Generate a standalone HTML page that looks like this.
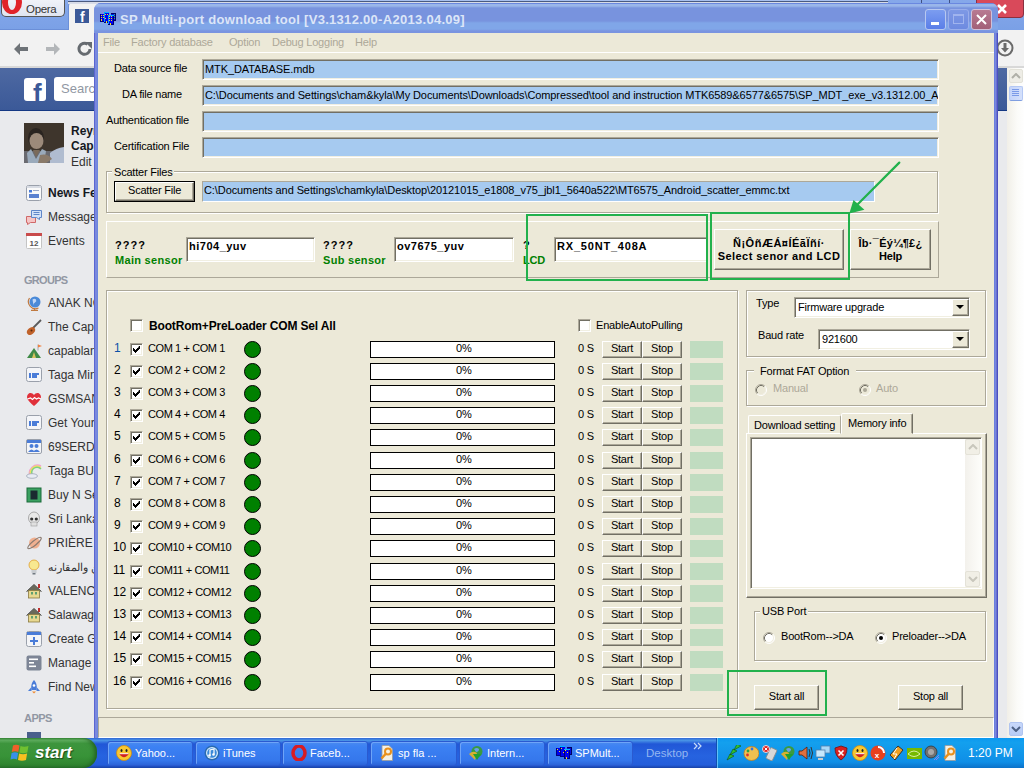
<!DOCTYPE html><html><head><meta charset="utf-8"><style>
*{margin:0;padding:0;box-sizing:border-box}
html,body{-webkit-font-smoothing:antialiased;width:1024px;height:768px;overflow:hidden;background:#e9eaed;font-family:"Liberation Sans",sans-serif;font-size:11px;color:#000}
.a{position:absolute}
.t{position:absolute;white-space:nowrap;line-height:13px;font-size:11px;letter-spacing:-0.2px}
.b{font-weight:bold}
/* sunken edit */
.ed{position:absolute;border:1px solid;border-color:#aca899 #fff #fff #aca899;box-shadow:inset 1px 1px 0 #716f64, inset -1px -1px 0 #f1efe2}
.ed2{position:absolute;border:1px solid;border-color:#aca899 #fff #fff #aca899;box-shadow:inset 1px 1px 0 #716f64, inset -1px -1px 0 #f1efe2}
.btn{position:absolute;background:#ece9d8;border:1px solid;border-color:#fff #716f64 #716f64 #fff;box-shadow:inset -1px -1px 0 #aca899}
.etch{position:absolute;border:1px solid;border-color:#aca899 #fff #fff #aca899;box-shadow:inset 1px 1px 0 #fff, 1px 1px 0 #aca899 inset}
.grp{position:absolute;border:1px solid #aca899;box-shadow:1px 1px 0 #fff, inset 1px 1px 0 #fff}
.cb{position:absolute;width:13px;height:13px;background:#fff;border:1px solid;border-color:#aca899 #fff #fff #aca899;box-shadow:inset 1px 1px 0 #716f64, inset -1px -1px 0 #f1efe2}
.gline{position:absolute;background:#22b14c}
</style></head><body><div class="a" style="left:0;top:0;width:1024px;height:30px;background:linear-gradient(#86a8ea,#7aa0e6)"></div>
<div class="a" style="left:1px;top:-4px;width:64px;height:21px;border:1px solid #555;border-top:none;border-radius:0 0 5px 5px;background:linear-gradient(#f4f6fb,#dfe4f0)"></div>
<div class="a" style="left:2px;top:-9px;width:20px;height:23px;border-radius:50%;border:4px solid #e0232a;border-left-width:6px;border-right-width:6px"></div>
<div class="t" style="left:26px;top:3px;font-size:11.5px;color:#333;letter-spacing:-0.3px">Opera</div>
<div class="a" style="left:68px;top:2px;width:300px;height:30px;background:#f2f2f2;border-radius:4px 4px 0 0;border:1px solid #6b8fd8;border-bottom:none"></div>
<div class="a" style="left:75px;top:9px;width:14px;height:14px;background:#3b5998"></div>
<div class="t b" style="left:80px;top:9px;font-size:14px;color:#fff;line-height:16px">f</div>
<div class="a" style="left:976px;top:-4px;width:48px;height:22px;background:#d9495a;border-radius:0 0 4px 4px;border:1px solid #8a3040"></div>
<svg class="a" style="left:994px;top:2px" width="16" height="14"><path d="M4 3 L12 11 M12 3 L4 11" stroke="#fff" stroke-width="2.6"/></svg>
<div class="a" style="left:0;top:30px;width:1024px;height:37px;background:#f2f2f2"></div><div class="a" style="left:0;top:29px;width:68px;height:1px;background:#6b8fd8"></div>
<div class="a" style="left:0;top:66px;width:1024px;height:2px;background:#d8d8d8"></div>
<svg class="a" style="left:12px;top:41px" width="20" height="16"><path d="M2 8 L8 2 L8 6 L16 6 L16 10 L8 10 L8 14 Z" fill="#6e7378"/></svg>
<svg class="a" style="left:44px;top:41px" width="20" height="16"><path d="M16 8 L10 2 L10 6 L2 6 L2 10 L10 10 L10 14 Z" fill="#b3b6b9"/></svg>
<svg class="a" style="left:77px;top:41px" width="16" height="16"><path d="M13 8 A5.5 5.5 0 1 1 10.5 3.2" fill="none" stroke="#666b70" stroke-width="3"/><path d="M8 1 L15 1 L15 8 Z" fill="#666b70"/></svg>
<svg class="a" style="left:996px;top:39px" width="18" height="18"><circle cx="9" cy="9" r="7.5" fill="none" stroke="#6a6a6a" stroke-width="2"/><path d="M7.5 4 h3 v5 h2.5 l-4 4.5 l-4 -4.5 h2.5z" fill="#6a6a6a"/></svg>
<div class="a" style="left:0;top:68px;width:1010px;height:43px;background:linear-gradient(#4e69a2,#3b5998);border-bottom:1px solid #133783"></div>
<div class="a" style="left:24px;top:78px;width:22px;height:23px;background:#fff;border-radius:3px;overflow:hidden"><div class="t b" style="left:9px;top:1px;font-size:26px;line-height:28px;color:#3b5998;letter-spacing:0">f</div></div>
<div class="a" style="left:54px;top:77px;width:60px;height:24px;background:#fff;border-radius:3px"></div>
<div class="t" style="left:61px;top:82px;font-size:13px;color:#9197a3;letter-spacing:0">Search</div>
<svg class="a" style="left:24px;top:123px" width="40" height="40"><rect width="40" height="40" fill="#3e352c"/><rect x="0" y="28" width="40" height="12" fill="#6a6a70"/><path d="M26 40 L26 30 Q32 25 40 24 L40 40Z" fill="#b0bcd0"/><ellipse cx="12" cy="15" rx="8" ry="10" fill="#2a2420"/><ellipse cx="12.5" cy="18" rx="7" ry="8" fill="#9c8a7a"/><path d="M7 26 L12 36 L18 26 L22 28 L20 40 L4 40 L3 30Z" fill="#9aaabb"/><path d="M9 27 L12 34 L16 27" fill="#7a6a5a"/><path d="M16 32 Q24 30 28 36 L22 40 L14 40Z" fill="#8a7a6a"/></svg>
<div class="t b" style="left:71px;top:125px;font-size:12px;color:#141823;letter-spacing:0">Reyna</div>
<div class="t b" style="left:71px;top:140px;font-size:12px;color:#141823;letter-spacing:0">Capa</div>
<div class="t" style="left:71px;top:156px;font-size:12px;color:#333;letter-spacing:0">Edit</div>
<svg class="a" style="left:26px;top:185px" width="16" height="16"><rect x="0.5" y="0.5" width="15" height="15" rx="2" fill="#fafafa" stroke="#9aa0ab"/><rect x="1" y="1" width="14" height="2" fill="#d8dce4"/><rect x="3" y="5" width="3" height="2.5" fill="#4a7cd8"/><rect x="7" y="5" width="6" height="1" fill="#9aa8c8"/><rect x="3" y="9" width="10" height="4" fill="#5b82d0"/></svg>
<div class="t b" style="left:48px;top:187px;font-size:12px;color:#141823;letter-spacing:0">News Feed</div>
<svg class="a" style="left:26px;top:209px" width="16" height="16"><path d="M0.5 7.5 h9 v6 h-5 l-3 2 v-2 h-1z" fill="#f5c5c5" stroke="#d06868" stroke-width="1"/><path d="M5.5 1.5 h10 v7 h-2 v2 l-3 -2 h-5z" fill="#d3e2f8" stroke="#5f86c9" stroke-width="1"/><path d="M7.5 3.5 h6 M7.5 5.5 h6" stroke="#5f86c9" stroke-width="1"/></svg>
<div class="t" style="left:48px;top:211px;font-size:12px;color:#333;letter-spacing:0">Messages</div>
<svg class="a" style="left:26px;top:233px" width="16" height="16"><rect x="0.5" y="0.5" width="15" height="15" rx="1" fill="#fff" stroke="#c4c4c4"/><rect x="0" y="0" width="16" height="3" fill="#c94b4b"/><text x="8" y="13" font-family="Liberation Sans" font-size="8" font-weight="bold" fill="#555" text-anchor="middle">12</text></svg>
<div class="t" style="left:48px;top:235px;font-size:12px;color:#333;letter-spacing:0">Events</div>
<div class="t b" style="left:24px;top:274px;font-size:11px;color:#9197a3;letter-spacing:-0.7px">GROUPS</div>
<svg class="a" style="left:26px;top:295px" width="16" height="16"><circle cx="9" cy="7" r="5.5" fill="#4a8ad8"/><path d="M6.5 4.5 q2 -1.5 3.5 0 q1 2 -1 3 q-2 1 -1.5 3" fill="#dfeaff" opacity=".8"/><path d="M3.5 3 A7 7 0 0 0 12.5 13" stroke="#c07a40" fill="none" stroke-width="1.2"/><path d="M5 15.5 h7" stroke="#c07a40" stroke-width="1.5"/><path d="M8.5 13 v2" stroke="#c07a40"/></svg>
<div class="t" style="left:48px;top:297px;font-size:12px;color:#333;letter-spacing:0">ANAK NO</div>
<svg class="a" style="left:26px;top:319px" width="16" height="16"><path d="M15 1 L7 9" stroke="#5a5a5a" stroke-width="1.8"/><ellipse cx="5" cy="12" rx="4.5" ry="3.3" transform="rotate(-40 5 12)" fill="#c0622a"/><circle cx="5.5" cy="11.5" r="1" fill="#5a2a10"/></svg>
<div class="t" style="left:48px;top:321px;font-size:12px;color:#333;letter-spacing:0">The Capa</div>
<svg class="a" style="left:26px;top:343px" width="16" height="16"><path d="M1 15 L8 5 L15 15 Z" fill="#3f8a46"/><path d="M6 15 L8 9 L10 15Z" fill="#d8c060"/><path d="M12 1.5 v6" stroke="#999" stroke-width="0.8"/><path d="M12 1.5 l4 1.5 l-4 1.5z" fill="#f08040"/></svg>
<div class="t" style="left:48px;top:345px;font-size:12px;color:#333;letter-spacing:0">capablanca</div>
<svg class="a" style="left:26px;top:367px" width="16" height="16"><rect x="0.5" y="0.5" width="15" height="14" rx="2" fill="#f4f5f8" stroke="#9aa0ab"/><path d="M3 6 h2 v5 h-2z M6 6 h7 v2 h-2 v3 h-5z" fill="#4a7cd8"/></svg>
<div class="t" style="left:48px;top:369px;font-size:12px;color:#333;letter-spacing:0">Taga Mind</div>
<svg class="a" style="left:26px;top:391px" width="16" height="16"><path d="M8 15 C2 10 0 7 1.5 4 C3 1 6.5 1.5 8 4 C9.5 1.5 13 1 14.5 4 C16 7 14 10 8 15Z" fill="#e0303a"/><path d="M1.5 8 l3 -1 l2 1.5 l2 -2 l2 1.5 l2 -1 l2.5 1" stroke="#fff" fill="none" stroke-width="1.2"/></svg>
<div class="t" style="left:48px;top:393px;font-size:12px;color:#333;letter-spacing:0">GSMSAN</div>
<svg class="a" style="left:26px;top:415px" width="16" height="16"><rect x="0.5" y="0.5" width="15" height="14" rx="2" fill="#f4f5f8" stroke="#9aa0ab"/><path d="M3 6 h2 v5 h-2z M6 6 h7 v2 h-2 v3 h-5z" fill="#4a7cd8"/></svg>
<div class="t" style="left:48px;top:417px;font-size:12px;color:#333;letter-spacing:0">Get Your</div>
<svg class="a" style="left:26px;top:439px" width="16" height="16"><rect x="0.5" y="0.5" width="15" height="14" rx="1.5" fill="#f4f5f8" stroke="#9aa0ab"/><rect x="1" y="1" width="14" height="3" fill="#4a7cd8"/><circle cx="5.5" cy="7" r="2" fill="#4a7cd8"/><circle cx="10.5" cy="7" r="2" fill="#4a7cd8"/><path d="M2 13 q3.5 -5 7 0z M7 13 q3.5 -5 7 0z" fill="#4a7cd8"/></svg>
<div class="t" style="left:48px;top:441px;font-size:12px;color:#333;letter-spacing:0">69SERDA</div>
<svg class="a" style="left:26px;top:463px" width="16" height="16"><path d="M4 13 A8 8 0 0 1 15 3" stroke="#f0a0d0" stroke-width="1.5" fill="none"/><path d="M5.5 13 A6.5 6.5 0 0 1 15 4.5" stroke="#f0e060" stroke-width="1.5" fill="none"/><path d="M7 13 A5 5 0 0 1 15 6" stroke="#80d080" stroke-width="1.5" fill="none"/><ellipse cx="6" cy="13" rx="5.5" ry="2.3" fill="#e8ecf4" stroke="#a0a8b8" stroke-width="0.8"/></svg>
<div class="t" style="left:48px;top:465px;font-size:12px;color:#333;letter-spacing:0">Taga BU</div>
<svg class="a" style="left:26px;top:487px" width="16" height="16"><rect x="1" y="1" width="14" height="14" fill="#3aa060" stroke="#1a6a3a"/><rect x="4.5" y="3.5" width="7" height="9" fill="#1a2a30"/></svg>
<div class="t" style="left:48px;top:489px;font-size:12px;color:#333;letter-spacing:0">Buy N Se</div>
<svg class="a" style="left:26px;top:511px" width="16" height="16"><ellipse cx="8" cy="7" rx="5.5" ry="6" fill="#e8e8e8" stroke="#999" stroke-width=".8"/><rect x="5" y="11" width="6" height="4" fill="#e0e0e0" stroke="#999" stroke-width=".6"/><circle cx="5.7" cy="8" r="1.6" fill="#333"/><circle cx="10.3" cy="8" r="1.6" fill="#333"/></svg>
<div class="t" style="left:48px;top:513px;font-size:12px;color:#333;letter-spacing:0">Sri Lanka</div>
<svg class="a" style="left:26px;top:535px" width="16" height="16"><circle cx="8.5" cy="8" r="5.5" fill="#f0b090"/><ellipse cx="8.5" cy="8" rx="8.5" ry="2.2" transform="rotate(-40 8.5 8)" fill="none" stroke="#8a7a70" stroke-width="1.2"/></svg>
<div class="t" style="left:48px;top:537px;font-size:12px;color:#333;letter-spacing:0">PRIÈRE</div>
<svg class="a" style="left:26px;top:559px" width="16" height="16"><circle cx="8" cy="6" r="5" fill="#f8e890" stroke="#e0a030" stroke-width=".8"/><rect x="5.5" y="11" width="5" height="3" fill="#c8ccd0"/><rect x="6.5" y="14" width="3" height="1.5" fill="#707880"/></svg>
<div class="t" style="left:48px;top:561px;font-size:11px;color:#333;letter-spacing:0">التحسين والمقارنه</div>
<svg class="a" style="left:26px;top:583px" width="16" height="16"><path d="M0.5 8.5 L8 1.5 L15.5 8.5" fill="#6a6a5a" stroke="#555" stroke-width="1"/><rect x="2.5" y="7.5" width="11" height="7.5" fill="#e8d890" stroke="#8a7a40" stroke-width=".8"/><rect x="12" y="1" width="2" height="4" fill="#c03030"/><rect x="5" y="9" width="2" height="2.5" fill="#60a070"/><rect x="9" y="9" width="2" height="2.5" fill="#60a070"/></svg>
<div class="t" style="left:48px;top:585px;font-size:12px;color:#333;letter-spacing:0">VALENCIA</div>
<svg class="a" style="left:26px;top:607px" width="16" height="16"><path d="M0.5 8.5 L8 1.5 L15.5 8.5" fill="#6a6a5a" stroke="#555" stroke-width="1"/><rect x="2.5" y="7.5" width="11" height="7.5" fill="#e8d890" stroke="#8a7a40" stroke-width=".8"/><rect x="12" y="1" width="2" height="4" fill="#c03030"/><rect x="5" y="9" width="2" height="2.5" fill="#60a070"/><rect x="9" y="9" width="2" height="2.5" fill="#60a070"/></svg>
<div class="t" style="left:48px;top:609px;font-size:12px;color:#333;letter-spacing:0">Salawag</div>
<svg class="a" style="left:26px;top:631px" width="16" height="16"><rect x="0.5" y="0.5" width="15" height="15" rx="2" fill="#f4f5f8" stroke="#9aa0ab"/><rect x="1" y="1" width="14" height="3" fill="#4a7cd8"/><path d="M8 6 v8 M4 10 h8" stroke="#4a7cd8" stroke-width="2"/></svg>
<div class="t" style="left:48px;top:633px;font-size:12px;color:#333;letter-spacing:0">Create G</div>
<svg class="a" style="left:26px;top:655px" width="16" height="16"><rect x="0.5" y="0.5" width="15" height="15" rx="2" fill="#7d8596"/><rect x="3" y="3.5" width="9" height="1.6" fill="#fff"/><rect x="3" y="7" width="5" height="1.6" fill="#fff"/><rect x="3" y="10.5" width="7" height="1.6" fill="#fff"/></svg>
<div class="t" style="left:48px;top:657px;font-size:12px;color:#333;letter-spacing:0">Manage</div>
<svg class="a" style="left:26px;top:679px" width="16" height="16"><path d="M8 1 C11 4 11 8 10.5 11 L5.5 11 C5 8 5 4 8 1Z" fill="#4a7cd8"/><path d="M5.5 8 L2 12 L5.5 12Z M10.5 8 L14 12 L10.5 12Z" fill="#4a7cd8"/><circle cx="8" cy="6.5" r="1.3" fill="#fff"/><path d="M6 12.5 h4 l-2 2z" fill="#f08a30"/></svg>
<div class="t" style="left:48px;top:681px;font-size:12px;color:#333;letter-spacing:0">Find New</div>
<div class="t b" style="left:24px;top:712px;font-size:11px;color:#9197a3;letter-spacing:-0.5px">APPS</div>
<div class="a" style="left:27px;top:732px;width:14px;height:8px;background:#4a5f8c"></div>
<div class="a" style="left:1007px;top:68px;width:17px;height:670px;background:linear-gradient(90deg,#f1efe8,#fbfbf8 60%,#fefefe)"></div>
<div class="a" style="left:1009px;top:69px;width:14px;height:14px;border-radius:2px;background:#eeede6;border:1px solid #e2e1d8"></div><svg class="a" style="left:1011px;top:73px" width="10" height="6"><path d="M1 5 L5 1 L9 5" fill="none" stroke="#b0b0a8" stroke-width="2"/></svg>
<div class="a" style="left:1009px;top:86px;width:14px;height:15px;border-radius:2px;background:linear-gradient(90deg,#c4d4fa,#d4e0fb);border:1px solid #b4c8f4;border-bottom-color:#7f9ee0"></div><svg class="a" style="left:1012px;top:89px" width="8" height="8"><path d="M0 0.5h7M0 2.5h7M0 4.5h7M0 6.5h7" stroke="#7a9ae8" stroke-width="1"/></svg>
<div class="a" style="left:1009px;top:722px;width:14px;height:14px;border-radius:2px;background:linear-gradient(#c8d8fa,#b8ccf6);border:1px solid #b0c4f0"></div><svg class="a" style="left:1011px;top:726px" width="10" height="6"><path d="M1 1 L5 5 L9 1" fill="none" stroke="#4d6185" stroke-width="2"/></svg>
<div class="a" style="left:68px;top:0;width:820px;height:1px;background:#a8c0f0"></div><div class="a" style="left:68px;top:1px;width:820px;height:1px;background:#4a5a80"></div><div class="a" style="left:68px;top:2px;width:820px;height:2px;background:#d8dce8"></div>
<div class="a" style="left:921px;top:0;width:1px;height:4px;background:#405080"></div><div class="a" style="left:949px;top:0;width:1px;height:4px;background:#405080"></div>
<div class="a" style="left:94px;top:3px;width:904px;height:760px;background:#7588e0;border-radius:7px 7px 0 0"></div>
<div class="a" style="left:94px;top:3px;width:904px;height:30px;border-radius:7px 7px 0 0;background:linear-gradient(#6a88e0 0px,#6a88e0 1px,#9ab6ea 1px,#9ab6ea 3px,#88a4e4 4px,#7893de 5px,#7893de 18px,#80a6e8 20px,#80a6e8 26px,#7a94e0 28px,#7a94e0 30px)"></div>
<svg class="a" style="left:98px;top:8px" width="20" height="18" shape-rendering="crispEdges"><rect x="2" y="6" width="5" height="8" fill="#000080"/><rect x="3" y="6" width="4" height="7" fill="#0000f0"/><rect x="13" y="5" width="5" height="8" fill="#000060"/><rect x="13" y="6" width="4" height="6" fill="#0010e0"/><rect x="6" y="4" width="5" height="11" fill="#000080"/><rect x="6" y="4" width="5" height="1" fill="#00b8ff"/><rect x="6" y="4" width="1" height="10" fill="#00a0ff"/><rect x="7" y="5" width="4" height="9" fill="#0000f0"/><rect x="10" y="7" width="6" height="10" fill="#000070"/><rect x="10" y="7" width="6" height="1" fill="#00b8ff"/><rect x="10" y="7" width="1" height="9" fill="#00a0ff"/><rect x="11" y="8" width="4" height="8" fill="#0000f0"/><g fill="#f0e020"><rect x="3" y="7" width="1" height="1"/><rect x="5" y="7" width="1" height="1"/><rect x="3" y="9" width="1" height="1"/><rect x="5" y="9" width="1" height="1"/><rect x="3" y="11" width="1" height="2"/><rect x="7" y="6" width="1" height="1"/><rect x="9" y="6" width="1" height="1"/><rect x="7" y="10" width="1" height="1"/><rect x="8" y="13" width="1" height="2"/><rect x="11" y="8" width="1" height="1"/><rect x="13" y="8" width="1" height="1"/><rect x="11" y="10" width="1" height="1"/><rect x="13" y="10" width="1" height="1"/><rect x="11" y="12" width="1" height="1"/><rect x="13" y="12" width="1" height="1"/><rect x="12" y="15" width="1" height="2"/></g><g fill="#40a080"><rect x="16" y="6" width="1" height="1"/><rect x="16" y="8" width="1" height="1"/><rect x="16" y="10" width="1" height="1"/></g></svg>
<div class="t b" style="left:120px;top:11px;font-size:13px;line-height:17px;color:#dce6f8;letter-spacing:0.29px">SP Multi-port download tool [V3.1312.00-A2013.04.09]</div>
<div class="a" style="left:925px;top:9px;width:21px;height:21px;border:1px solid #b8c8f0;border-radius:3px;background:linear-gradient(#7c9df0,#5a7ee8)"></div><div class="a" style="left:931px;top:22px;width:8px;height:3px;background:#fff"></div>
<div class="a" style="left:948px;top:9px;width:21px;height:21px;border:1px solid #9db0ec;border-radius:3px;background:linear-gradient(#7f9ae6,#6c88e0);opacity:.9"></div><div class="a" style="left:953px;top:14px;width:11px;height:10px;border:1px solid #a0b4ee;border-top-width:2px"></div>
<div class="a" style="left:971px;top:9px;width:21px;height:21px;border:1px solid #d0c0d8;border-radius:3px;background:linear-gradient(#b87a92,#a26078)"></div>
<svg class="a" style="left:971px;top:9px" width="21" height="21"><path d="M6 6 L15 15 M15 6 L6 15" stroke="#fff" stroke-width="2"/></svg>
<div class="a" style="left:94px;top:33px;width:4px;height:735px;background:linear-gradient(90deg,#5a66d0 0,#5a66d0 1px,#7a88de 1px,#7a88de 3px,#6c88de 3px)"></div>
<div class="a" style="left:994px;top:33px;width:4px;height:735px;background:linear-gradient(90deg,#6b7ede 0,#6b7ede 1px,#7788dd 1px,#7788dd 2px,#6a70d0 2px,#6a70d0 3px,#4a50c0 3px)"></div>
<div class="a" style="left:98px;top:33px;width:896px;height:735px;background:#ece9d8"></div>
<div class="t" style="left:103px;top:36px;color:#aca899">File</div>
<div class="t" style="left:131px;top:36px;color:#aca899">Factory database</div>
<div class="t" style="left:229px;top:36px;color:#aca899">Option</div>
<div class="t" style="left:272px;top:36px;color:#aca899">Debug Logging</div>
<div class="t" style="left:355px;top:36px;color:#aca899">Help</div>
<div class="a" style="left:98px;top:52px;width:896px;height:1px;background:#fff"></div>
<div class="t" style="left:114px;top:62px">Data source file</div>
<div class="ed" style="left:202px;top:59px;width:737px;height:21px;background:#a6caf0;overflow:hidden"><div class="t" style="left:2px;top:3px;letter-spacing:-0.09px">MTK_DATABASE.mdb</div></div>
<div class="t" style="left:122px;top:88px">DA file name</div>
<div class="ed" style="left:202px;top:85px;width:737px;height:21px;background:#a6caf0;overflow:hidden"><div class="t" style="left:2px;top:3px;letter-spacing:-0.09px">C:\Documents and Settings\cham&amp;kyla\My Documents\Downloads\Compressed\tool and instruction MTK6589&amp;6577&amp;6575\SP_MDT_exe_v3.1312.00_A2013.04.09</div></div>
<div class="t" style="left:106px;top:114px">Authentication file</div>
<div class="ed" style="left:202px;top:111px;width:737px;height:21px;background:#a6caf0;overflow:hidden"><div class="t" style="left:2px;top:3px;letter-spacing:-0.09px"></div></div>
<div class="t" style="left:114px;top:140px">Certification File</div>
<div class="ed" style="left:202px;top:137px;width:737px;height:21px;background:#a6caf0;overflow:hidden"><div class="t" style="left:2px;top:3px;letter-spacing:-0.09px"></div></div>
<div class="grp" style="left:106px;top:171px;width:832px;height:42px"></div>
<div class="a" style="left:112px;top:165px;width:62px;height:12px;background:#ece9d8"></div>
<div class="t" style="left:114px;top:166px">Scatter Files</div>
<div class="a" style="left:114px;top:181px;width:81px;height:21px;border:1px solid #000;background:#ece9d8"><div class="a" style="left:0;top:0;width:79px;height:19px;border:1px solid;border-color:#fff #716f64 #716f64 #fff;box-shadow:inset -1px -1px 0 #aca899"></div></div>
<div class="t" style="left:128px;top:184px">Scatter File</div>
<div class="a" style="left:202px;top:181px;width:673px;height:21px;background:#a6caf0;overflow:hidden;border:1px solid;border-color:#aca899 #fff #fff #aca899"><div class="t" style="left:1px;top:2px;letter-spacing:-0.09px">C:\Documents and Settings\chamkyla\Desktop\20121015_e1808_v75_jbl1_5640a522\MT6575_Android_scatter_emmc.txt</div></div>
<div class="a" style="left:106px;top:221px;width:833px;height:57px;border:1px solid;border-color:#fff #aca899 #aca899 #fff"></div>
<div class="t b" style="left:115px;top:239px;letter-spacing:1px">????</div>
<div class="t b" style="left:115px;top:254px;color:#008000;letter-spacing:0.3px">Main sensor</div>
<div class="ed" style="left:186px;top:237px;width:129px;height:25px;background:#fff"><div class="t b" style="left:2px;top:2px;letter-spacing:0.5px">hi704_yuv</div></div>
<div class="t b" style="left:323px;top:239px;letter-spacing:1px">????</div>
<div class="t b" style="left:323px;top:254px;color:#008000;letter-spacing:0.3px">Sub sensor</div>
<div class="ed" style="left:394px;top:237px;width:120px;height:25px;background:#fff"><div class="t b" style="left:2px;top:2px;letter-spacing:0.5px">ov7675_yuv</div></div>
<div class="ed" style="left:554px;top:237px;width:154px;height:25px;background:#fff"><div class="t b" style="left:2px;top:2px;letter-spacing:0.8px">RX_50NT_408A</div></div>
<div class="t b" style="left:523px;top:239px">?</div>
<div class="t b" style="left:523px;top:254px;color:#008000">LCD</div>
<div class="btn" style="left:714px;top:229px;width:130px;height:41px"></div>
<div class="t b" style="left:714px;top:237px;width:130px;text-align:center;letter-spacing:0.5px">Ñ¡ÔñÆÁ¤ÍÉãÏñí·</div>
<div class="t b" style="left:714px;top:250px;width:130px;text-align:center;letter-spacing:0.45px">Select senor and LCD</div>
<div class="btn" style="left:850px;top:229px;width:81px;height:41px"></div>
<div class="t b" style="left:850px;top:237px;width:81px;text-align:center;letter-spacing:0.3px">Îb·¯Éý¼¶£¿</div>
<div class="t b" style="left:850px;top:250px;width:81px;text-align:center">Help</div>
<div class="grp" style="left:106px;top:290px;width:632px;height:419px"></div>
<div class="cb" style="left:130px;top:319px"></div>
<div class="t b" style="left:149px;top:320px;font-size:12px;letter-spacing:-0.16px">BootRom+PreLoader COM Sel All</div>
<div class="cb" style="left:578px;top:319px"></div>
<div class="t" style="left:596px;top:319px">EnableAutoPulling</div>
<div class="t" style="left:114px;top:342px;font-size:12px;color:#0a50a8;letter-spacing:-0.2px">1</div>
<div class="cb" style="left:130px;top:343px"><svg class="a" style="left:2px;top:2px" width="7" height="7"><path d="M6 0h1v3h-1v1h-1v1h-1v1h-1v1h-1v-1h-1v-1h-1v-3h1v1h1v1h1v-1h1v-1h1z" fill="#000"/></svg></div>
<div class="t" style="left:148px;top:342px;letter-spacing:-0.4px">COM 1 + COM 1</div>
<div class="a" style="left:244px;top:341px;width:17px;height:17px;border-radius:50%;background:#008000;border:1px solid #000"></div>
<div class="a" style="left:370px;top:341px;width:185px;height:17px;background:#fff;border:1px solid #000"></div>
<div class="t" style="left:456px;top:342px">0%</div>
<div class="t" style="left:578px;top:342px">0 S</div>
<div class="btn" style="left:602px;top:341px;width:40px;height:17px"></div><div class="t" style="left:602px;top:342px;width:40px;text-align:center">Start</div>
<div class="btn" style="left:642px;top:341px;width:40px;height:17px"></div><div class="t" style="left:642px;top:342px;width:40px;text-align:center">Stop</div>
<div class="a" style="left:690px;top:341px;width:33px;height:17px;background:#c0dcc0"></div>
<div class="t" style="left:114px;top:364px;font-size:12px;color:#000;letter-spacing:-0.2px">2</div>
<div class="cb" style="left:130px;top:365px"><svg class="a" style="left:2px;top:2px" width="7" height="7"><path d="M6 0h1v3h-1v1h-1v1h-1v1h-1v1h-1v-1h-1v-1h-1v-3h1v1h1v1h1v-1h1v-1h1z" fill="#000"/></svg></div>
<div class="t" style="left:148px;top:364px;letter-spacing:-0.4px">COM 2 + COM 2</div>
<div class="a" style="left:244px;top:363px;width:17px;height:17px;border-radius:50%;background:#008000;border:1px solid #000"></div>
<div class="a" style="left:370px;top:363px;width:185px;height:17px;background:#fff;border:1px solid #000"></div>
<div class="t" style="left:456px;top:364px">0%</div>
<div class="t" style="left:578px;top:364px">0 S</div>
<div class="btn" style="left:602px;top:363px;width:40px;height:17px"></div><div class="t" style="left:602px;top:364px;width:40px;text-align:center">Start</div>
<div class="btn" style="left:642px;top:363px;width:40px;height:17px"></div><div class="t" style="left:642px;top:364px;width:40px;text-align:center">Stop</div>
<div class="a" style="left:690px;top:363px;width:33px;height:17px;background:#c0dcc0"></div>
<div class="t" style="left:114px;top:386px;font-size:12px;color:#000;letter-spacing:-0.2px">3</div>
<div class="cb" style="left:130px;top:387px"><svg class="a" style="left:2px;top:2px" width="7" height="7"><path d="M6 0h1v3h-1v1h-1v1h-1v1h-1v1h-1v-1h-1v-1h-1v-3h1v1h1v1h1v-1h1v-1h1z" fill="#000"/></svg></div>
<div class="t" style="left:148px;top:386px;letter-spacing:-0.4px">COM 3 + COM 3</div>
<div class="a" style="left:244px;top:385px;width:17px;height:17px;border-radius:50%;background:#008000;border:1px solid #000"></div>
<div class="a" style="left:370px;top:385px;width:185px;height:17px;background:#fff;border:1px solid #000"></div>
<div class="t" style="left:456px;top:386px">0%</div>
<div class="t" style="left:578px;top:386px">0 S</div>
<div class="btn" style="left:602px;top:385px;width:40px;height:17px"></div><div class="t" style="left:602px;top:386px;width:40px;text-align:center">Start</div>
<div class="btn" style="left:642px;top:385px;width:40px;height:17px"></div><div class="t" style="left:642px;top:386px;width:40px;text-align:center">Stop</div>
<div class="a" style="left:690px;top:385px;width:33px;height:17px;background:#c0dcc0"></div>
<div class="t" style="left:114px;top:408px;font-size:12px;color:#000;letter-spacing:-0.2px">4</div>
<div class="cb" style="left:130px;top:409px"><svg class="a" style="left:2px;top:2px" width="7" height="7"><path d="M6 0h1v3h-1v1h-1v1h-1v1h-1v1h-1v-1h-1v-1h-1v-3h1v1h1v1h1v-1h1v-1h1z" fill="#000"/></svg></div>
<div class="t" style="left:148px;top:408px;letter-spacing:-0.4px">COM 4 + COM 4</div>
<div class="a" style="left:244px;top:407px;width:17px;height:17px;border-radius:50%;background:#008000;border:1px solid #000"></div>
<div class="a" style="left:370px;top:407px;width:185px;height:17px;background:#fff;border:1px solid #000"></div>
<div class="t" style="left:456px;top:408px">0%</div>
<div class="t" style="left:578px;top:408px">0 S</div>
<div class="btn" style="left:602px;top:407px;width:40px;height:17px"></div><div class="t" style="left:602px;top:408px;width:40px;text-align:center">Start</div>
<div class="btn" style="left:642px;top:407px;width:40px;height:17px"></div><div class="t" style="left:642px;top:408px;width:40px;text-align:center">Stop</div>
<div class="a" style="left:690px;top:407px;width:33px;height:17px;background:#c0dcc0"></div>
<div class="t" style="left:114px;top:430px;font-size:12px;color:#000;letter-spacing:-0.2px">5</div>
<div class="cb" style="left:130px;top:431px"><svg class="a" style="left:2px;top:2px" width="7" height="7"><path d="M6 0h1v3h-1v1h-1v1h-1v1h-1v1h-1v-1h-1v-1h-1v-3h1v1h1v1h1v-1h1v-1h1z" fill="#000"/></svg></div>
<div class="t" style="left:148px;top:430px;letter-spacing:-0.4px">COM 5 + COM 5</div>
<div class="a" style="left:244px;top:429px;width:17px;height:17px;border-radius:50%;background:#008000;border:1px solid #000"></div>
<div class="a" style="left:370px;top:429px;width:185px;height:17px;background:#fff;border:1px solid #000"></div>
<div class="t" style="left:456px;top:430px">0%</div>
<div class="t" style="left:578px;top:430px">0 S</div>
<div class="btn" style="left:602px;top:429px;width:40px;height:17px"></div><div class="t" style="left:602px;top:430px;width:40px;text-align:center">Start</div>
<div class="btn" style="left:642px;top:429px;width:40px;height:17px"></div><div class="t" style="left:642px;top:430px;width:40px;text-align:center">Stop</div>
<div class="a" style="left:690px;top:429px;width:33px;height:17px;background:#c0dcc0"></div>
<div class="t" style="left:114px;top:453px;font-size:12px;color:#000;letter-spacing:-0.2px">6</div>
<div class="cb" style="left:130px;top:454px"><svg class="a" style="left:2px;top:2px" width="7" height="7"><path d="M6 0h1v3h-1v1h-1v1h-1v1h-1v1h-1v-1h-1v-1h-1v-3h1v1h1v1h1v-1h1v-1h1z" fill="#000"/></svg></div>
<div class="t" style="left:148px;top:453px;letter-spacing:-0.4px">COM 6 + COM 6</div>
<div class="a" style="left:244px;top:452px;width:17px;height:17px;border-radius:50%;background:#008000;border:1px solid #000"></div>
<div class="a" style="left:370px;top:452px;width:185px;height:17px;background:#fff;border:1px solid #000"></div>
<div class="t" style="left:456px;top:453px">0%</div>
<div class="t" style="left:578px;top:453px">0 S</div>
<div class="btn" style="left:602px;top:452px;width:40px;height:17px"></div><div class="t" style="left:602px;top:453px;width:40px;text-align:center">Start</div>
<div class="btn" style="left:642px;top:452px;width:40px;height:17px"></div><div class="t" style="left:642px;top:453px;width:40px;text-align:center">Stop</div>
<div class="a" style="left:690px;top:452px;width:33px;height:17px;background:#c0dcc0"></div>
<div class="t" style="left:114px;top:475px;font-size:12px;color:#000;letter-spacing:-0.2px">7</div>
<div class="cb" style="left:130px;top:476px"><svg class="a" style="left:2px;top:2px" width="7" height="7"><path d="M6 0h1v3h-1v1h-1v1h-1v1h-1v1h-1v-1h-1v-1h-1v-3h1v1h1v1h1v-1h1v-1h1z" fill="#000"/></svg></div>
<div class="t" style="left:148px;top:475px;letter-spacing:-0.4px">COM 7 + COM 7</div>
<div class="a" style="left:244px;top:474px;width:17px;height:17px;border-radius:50%;background:#008000;border:1px solid #000"></div>
<div class="a" style="left:370px;top:474px;width:185px;height:17px;background:#fff;border:1px solid #000"></div>
<div class="t" style="left:456px;top:475px">0%</div>
<div class="t" style="left:578px;top:475px">0 S</div>
<div class="btn" style="left:602px;top:474px;width:40px;height:17px"></div><div class="t" style="left:602px;top:475px;width:40px;text-align:center">Start</div>
<div class="btn" style="left:642px;top:474px;width:40px;height:17px"></div><div class="t" style="left:642px;top:475px;width:40px;text-align:center">Stop</div>
<div class="a" style="left:690px;top:474px;width:33px;height:17px;background:#c0dcc0"></div>
<div class="t" style="left:114px;top:497px;font-size:12px;color:#000;letter-spacing:-0.2px">8</div>
<div class="cb" style="left:130px;top:498px"><svg class="a" style="left:2px;top:2px" width="7" height="7"><path d="M6 0h1v3h-1v1h-1v1h-1v1h-1v1h-1v-1h-1v-1h-1v-3h1v1h1v1h1v-1h1v-1h1z" fill="#000"/></svg></div>
<div class="t" style="left:148px;top:497px;letter-spacing:-0.4px">COM 8 + COM 8</div>
<div class="a" style="left:244px;top:496px;width:17px;height:17px;border-radius:50%;background:#008000;border:1px solid #000"></div>
<div class="a" style="left:370px;top:496px;width:185px;height:17px;background:#fff;border:1px solid #000"></div>
<div class="t" style="left:456px;top:497px">0%</div>
<div class="t" style="left:578px;top:497px">0 S</div>
<div class="btn" style="left:602px;top:496px;width:40px;height:17px"></div><div class="t" style="left:602px;top:497px;width:40px;text-align:center">Start</div>
<div class="btn" style="left:642px;top:496px;width:40px;height:17px"></div><div class="t" style="left:642px;top:497px;width:40px;text-align:center">Stop</div>
<div class="a" style="left:690px;top:496px;width:33px;height:17px;background:#c0dcc0"></div>
<div class="t" style="left:114px;top:519px;font-size:12px;color:#000;letter-spacing:-0.2px">9</div>
<div class="cb" style="left:130px;top:520px"><svg class="a" style="left:2px;top:2px" width="7" height="7"><path d="M6 0h1v3h-1v1h-1v1h-1v1h-1v1h-1v-1h-1v-1h-1v-3h1v1h1v1h1v-1h1v-1h1z" fill="#000"/></svg></div>
<div class="t" style="left:148px;top:519px;letter-spacing:-0.4px">COM 9 + COM 9</div>
<div class="a" style="left:244px;top:518px;width:17px;height:17px;border-radius:50%;background:#008000;border:1px solid #000"></div>
<div class="a" style="left:370px;top:518px;width:185px;height:17px;background:#fff;border:1px solid #000"></div>
<div class="t" style="left:456px;top:519px">0%</div>
<div class="t" style="left:578px;top:519px">0 S</div>
<div class="btn" style="left:602px;top:518px;width:40px;height:17px"></div><div class="t" style="left:602px;top:519px;width:40px;text-align:center">Start</div>
<div class="btn" style="left:642px;top:518px;width:40px;height:17px"></div><div class="t" style="left:642px;top:519px;width:40px;text-align:center">Stop</div>
<div class="a" style="left:690px;top:518px;width:33px;height:17px;background:#c0dcc0"></div>
<div class="t" style="left:113px;top:541px;font-size:12px;color:#000;letter-spacing:-0.2px">10</div>
<div class="cb" style="left:130px;top:542px"><svg class="a" style="left:2px;top:2px" width="7" height="7"><path d="M6 0h1v3h-1v1h-1v1h-1v1h-1v1h-1v-1h-1v-1h-1v-3h1v1h1v1h1v-1h1v-1h1z" fill="#000"/></svg></div>
<div class="t" style="left:148px;top:541px;letter-spacing:-0.4px">COM10 + COM10</div>
<div class="a" style="left:244px;top:540px;width:17px;height:17px;border-radius:50%;background:#008000;border:1px solid #000"></div>
<div class="a" style="left:370px;top:540px;width:185px;height:17px;background:#fff;border:1px solid #000"></div>
<div class="t" style="left:456px;top:541px">0%</div>
<div class="t" style="left:578px;top:541px">0 S</div>
<div class="btn" style="left:602px;top:540px;width:40px;height:17px"></div><div class="t" style="left:602px;top:541px;width:40px;text-align:center">Start</div>
<div class="btn" style="left:642px;top:540px;width:40px;height:17px"></div><div class="t" style="left:642px;top:541px;width:40px;text-align:center">Stop</div>
<div class="a" style="left:690px;top:540px;width:33px;height:17px;background:#c0dcc0"></div>
<div class="t" style="left:113px;top:564px;font-size:12px;color:#000;letter-spacing:-0.2px">11</div>
<div class="cb" style="left:130px;top:565px"><svg class="a" style="left:2px;top:2px" width="7" height="7"><path d="M6 0h1v3h-1v1h-1v1h-1v1h-1v1h-1v-1h-1v-1h-1v-3h1v1h1v1h1v-1h1v-1h1z" fill="#000"/></svg></div>
<div class="t" style="left:148px;top:564px;letter-spacing:-0.4px">COM11 + COM11</div>
<div class="a" style="left:244px;top:563px;width:17px;height:17px;border-radius:50%;background:#008000;border:1px solid #000"></div>
<div class="a" style="left:370px;top:563px;width:185px;height:17px;background:#fff;border:1px solid #000"></div>
<div class="t" style="left:456px;top:564px">0%</div>
<div class="t" style="left:578px;top:564px">0 S</div>
<div class="btn" style="left:602px;top:563px;width:40px;height:17px"></div><div class="t" style="left:602px;top:564px;width:40px;text-align:center">Start</div>
<div class="btn" style="left:642px;top:563px;width:40px;height:17px"></div><div class="t" style="left:642px;top:564px;width:40px;text-align:center">Stop</div>
<div class="a" style="left:690px;top:563px;width:33px;height:17px;background:#c0dcc0"></div>
<div class="t" style="left:113px;top:586px;font-size:12px;color:#000;letter-spacing:-0.2px">12</div>
<div class="cb" style="left:130px;top:587px"><svg class="a" style="left:2px;top:2px" width="7" height="7"><path d="M6 0h1v3h-1v1h-1v1h-1v1h-1v1h-1v-1h-1v-1h-1v-3h1v1h1v1h1v-1h1v-1h1z" fill="#000"/></svg></div>
<div class="t" style="left:148px;top:586px;letter-spacing:-0.4px">COM12 + COM12</div>
<div class="a" style="left:244px;top:585px;width:17px;height:17px;border-radius:50%;background:#008000;border:1px solid #000"></div>
<div class="a" style="left:370px;top:585px;width:185px;height:17px;background:#fff;border:1px solid #000"></div>
<div class="t" style="left:456px;top:586px">0%</div>
<div class="t" style="left:578px;top:586px">0 S</div>
<div class="btn" style="left:602px;top:585px;width:40px;height:17px"></div><div class="t" style="left:602px;top:586px;width:40px;text-align:center">Start</div>
<div class="btn" style="left:642px;top:585px;width:40px;height:17px"></div><div class="t" style="left:642px;top:586px;width:40px;text-align:center">Stop</div>
<div class="a" style="left:690px;top:585px;width:33px;height:17px;background:#c0dcc0"></div>
<div class="t" style="left:113px;top:608px;font-size:12px;color:#000;letter-spacing:-0.2px">13</div>
<div class="cb" style="left:130px;top:609px"><svg class="a" style="left:2px;top:2px" width="7" height="7"><path d="M6 0h1v3h-1v1h-1v1h-1v1h-1v1h-1v-1h-1v-1h-1v-3h1v1h1v1h1v-1h1v-1h1z" fill="#000"/></svg></div>
<div class="t" style="left:148px;top:608px;letter-spacing:-0.4px">COM13 + COM13</div>
<div class="a" style="left:244px;top:607px;width:17px;height:17px;border-radius:50%;background:#008000;border:1px solid #000"></div>
<div class="a" style="left:370px;top:607px;width:185px;height:17px;background:#fff;border:1px solid #000"></div>
<div class="t" style="left:456px;top:608px">0%</div>
<div class="t" style="left:578px;top:608px">0 S</div>
<div class="btn" style="left:602px;top:607px;width:40px;height:17px"></div><div class="t" style="left:602px;top:608px;width:40px;text-align:center">Start</div>
<div class="btn" style="left:642px;top:607px;width:40px;height:17px"></div><div class="t" style="left:642px;top:608px;width:40px;text-align:center">Stop</div>
<div class="a" style="left:690px;top:607px;width:33px;height:17px;background:#c0dcc0"></div>
<div class="t" style="left:113px;top:630px;font-size:12px;color:#000;letter-spacing:-0.2px">14</div>
<div class="cb" style="left:130px;top:631px"><svg class="a" style="left:2px;top:2px" width="7" height="7"><path d="M6 0h1v3h-1v1h-1v1h-1v1h-1v1h-1v-1h-1v-1h-1v-3h1v1h1v1h1v-1h1v-1h1z" fill="#000"/></svg></div>
<div class="t" style="left:148px;top:630px;letter-spacing:-0.4px">COM14 + COM14</div>
<div class="a" style="left:244px;top:629px;width:17px;height:17px;border-radius:50%;background:#008000;border:1px solid #000"></div>
<div class="a" style="left:370px;top:629px;width:185px;height:17px;background:#fff;border:1px solid #000"></div>
<div class="t" style="left:456px;top:630px">0%</div>
<div class="t" style="left:578px;top:630px">0 S</div>
<div class="btn" style="left:602px;top:629px;width:40px;height:17px"></div><div class="t" style="left:602px;top:630px;width:40px;text-align:center">Start</div>
<div class="btn" style="left:642px;top:629px;width:40px;height:17px"></div><div class="t" style="left:642px;top:630px;width:40px;text-align:center">Stop</div>
<div class="a" style="left:690px;top:629px;width:33px;height:17px;background:#c0dcc0"></div>
<div class="t" style="left:113px;top:652px;font-size:12px;color:#000;letter-spacing:-0.2px">15</div>
<div class="cb" style="left:130px;top:653px"><svg class="a" style="left:2px;top:2px" width="7" height="7"><path d="M6 0h1v3h-1v1h-1v1h-1v1h-1v1h-1v-1h-1v-1h-1v-3h1v1h1v1h1v-1h1v-1h1z" fill="#000"/></svg></div>
<div class="t" style="left:148px;top:652px;letter-spacing:-0.4px">COM15 + COM15</div>
<div class="a" style="left:244px;top:651px;width:17px;height:17px;border-radius:50%;background:#008000;border:1px solid #000"></div>
<div class="a" style="left:370px;top:651px;width:185px;height:17px;background:#fff;border:1px solid #000"></div>
<div class="t" style="left:456px;top:652px">0%</div>
<div class="t" style="left:578px;top:652px">0 S</div>
<div class="btn" style="left:602px;top:651px;width:40px;height:17px"></div><div class="t" style="left:602px;top:652px;width:40px;text-align:center">Start</div>
<div class="btn" style="left:642px;top:651px;width:40px;height:17px"></div><div class="t" style="left:642px;top:652px;width:40px;text-align:center">Stop</div>
<div class="a" style="left:690px;top:651px;width:33px;height:17px;background:#c0dcc0"></div>
<div class="t" style="left:113px;top:675px;font-size:12px;color:#000;letter-spacing:-0.2px">16</div>
<div class="cb" style="left:130px;top:676px"><svg class="a" style="left:2px;top:2px" width="7" height="7"><path d="M6 0h1v3h-1v1h-1v1h-1v1h-1v1h-1v-1h-1v-1h-1v-3h1v1h1v1h1v-1h1v-1h1z" fill="#000"/></svg></div>
<div class="t" style="left:148px;top:675px;letter-spacing:-0.4px">COM16 + COM16</div>
<div class="a" style="left:244px;top:674px;width:17px;height:17px;border-radius:50%;background:#008000;border:1px solid #000"></div>
<div class="a" style="left:370px;top:674px;width:185px;height:17px;background:#fff;border:1px solid #000"></div>
<div class="t" style="left:456px;top:675px">0%</div>
<div class="t" style="left:578px;top:675px">0 S</div>
<div class="btn" style="left:602px;top:674px;width:40px;height:17px"></div><div class="t" style="left:602px;top:675px;width:40px;text-align:center">Start</div>
<div class="btn" style="left:642px;top:674px;width:40px;height:17px"></div><div class="t" style="left:642px;top:675px;width:40px;text-align:center">Stop</div>
<div class="a" style="left:690px;top:674px;width:33px;height:17px;background:#c0dcc0"></div>
<div class="grp" style="left:746px;top:290px;width:240px;height:67px"></div>
<div class="t" style="left:756px;top:297px">Type</div>
<div class="ed" style="left:794px;top:297px;width:176px;height:21px;background:#fff"><div class="t" style="left:3px;top:3px">Firmware upgrade</div></div>
<div class="t" style="left:758px;top:329px">Baud rate</div>
<div class="ed" style="left:818px;top:329px;width:152px;height:21px;background:#fff"><div class="t" style="left:3px;top:3px">921600</div></div>
<div class="btn" style="left:952px;top:299px;width:17px;height:17px"></div><svg class="a" style="left:956px;top:305px" width="9" height="5"><path d="M0 0 H8 L4 4 Z" fill="#000"/></svg>
<div class="btn" style="left:952px;top:331px;width:17px;height:17px"></div><svg class="a" style="left:956px;top:337px" width="9" height="5"><path d="M0 0 H8 L4 4 Z" fill="#000"/></svg>
<div class="grp" style="left:746px;top:370px;width:240px;height:36px"></div>
<div class="a" style="left:754px;top:364px;width:102px;height:12px;background:#ece9d8"></div>
<div class="t" style="left:760px;top:365px">Format FAT Option</div>
<svg class="a" style="left:755px;top:384px" width="12" height="12"><circle cx="6" cy="6" r="5" fill="#ece9d8"/><path d="M2.11 9.89 A5.5 5.5 0 0 1 9.89 2.11" stroke="#aca899" fill="none"/><path d="M2.82 9.18 A4.5 4.5 0 0 1 9.18 2.82" stroke="#716f64" fill="none"/><path d="M9.89 2.11 A5.5 5.5 0 0 1 2.11 9.89" stroke="#fff" fill="none"/><path d="M9.18 2.82 A4.5 4.5 0 0 1 2.82 9.18" stroke="#f1efe2" fill="none"/></svg>
<div class="t" style="left:773px;top:382px;color:#aca899">Manual</div>
<svg class="a" style="left:859px;top:384px" width="12" height="12"><circle cx="6" cy="6" r="5" fill="#ece9d8"/><path d="M2.11 9.89 A5.5 5.5 0 0 1 9.89 2.11" stroke="#aca899" fill="none"/><path d="M2.82 9.18 A4.5 4.5 0 0 1 9.18 2.82" stroke="#716f64" fill="none"/><path d="M9.89 2.11 A5.5 5.5 0 0 1 2.11 9.89" stroke="#fff" fill="none"/><path d="M9.18 2.82 A4.5 4.5 0 0 1 2.82 9.18" stroke="#f1efe2" fill="none"/><circle cx="6" cy="6" r="2" fill="#aca899"/></svg>
<div class="t" style="left:876px;top:382px;color:#aca899">Auto</div>
<div class="a" style="left:746px;top:433px;width:241px;height:165px;border:1px solid;border-color:#fff #716f64 #716f64 #fff;box-shadow:inset -1px -1px 0 #aca899"></div>
<div class="a" style="left:748px;top:415px;width:93px;height:19px;border:1px solid;border-color:#fff #aca899 transparent #fff;border-radius:2px 2px 0 0"></div>
<div class="t" style="left:754px;top:419px">Download setting</div>
<div class="a" style="left:841px;top:413px;width:72px;height:21px;background:#ece9d8;border:1px solid;border-color:#fff #716f64 transparent #fff;border-radius:2px 2px 0 0;box-shadow:inset -1px 0 0 #aca899"></div>
<div class="t" style="left:848px;top:417px">Memory info</div>
<div class="ed" style="left:750px;top:437px;width:232px;height:152px;background:#fff"></div>
<div class="a" style="left:965px;top:439px;width:16px;height:148px;background:linear-gradient(90deg,#f3f1ec,#fdfdfa)"></div>
<div class="a" style="left:965px;top:439px;width:15px;height:16px;border:1px solid #e4e2d8;border-radius:2px;background:#f1efe6"></div><svg class="a" style="left:968px;top:444px" width="10" height="6"><path d="M1 5 L5 1 L9 5" fill="none" stroke="#c8c6bc" stroke-width="2"/></svg>
<div class="a" style="left:965px;top:571px;width:15px;height:16px;border:1px solid #e4e2d8;border-radius:2px;background:#f1efe6"></div><svg class="a" style="left:968px;top:576px" width="10" height="6"><path d="M1 1 L5 5 L9 1" fill="none" stroke="#c8c6bc" stroke-width="2"/></svg>
<div class="grp" style="left:754px;top:611px;width:232px;height:50px"></div>
<div class="a" style="left:760px;top:604px;width:48px;height:12px;background:#ece9d8"></div>
<div class="t" style="left:762px;top:605px">USB Port</div>
<svg class="a" style="left:763px;top:632px" width="12" height="12"><circle cx="6" cy="6" r="5" fill="#fff"/><path d="M2.11 9.89 A5.5 5.5 0 0 1 9.89 2.11" stroke="#aca899" fill="none"/><path d="M2.82 9.18 A4.5 4.5 0 0 1 9.18 2.82" stroke="#716f64" fill="none"/><path d="M9.89 2.11 A5.5 5.5 0 0 1 2.11 9.89" stroke="#fff" fill="none"/><path d="M9.18 2.82 A4.5 4.5 0 0 1 2.82 9.18" stroke="#f1efe2" fill="none"/></svg>
<div class="t" style="left:781px;top:630px">BootRom--&gt;DA</div>
<svg class="a" style="left:875px;top:632px" width="12" height="12"><circle cx="6" cy="6" r="5" fill="#fff"/><path d="M2.11 9.89 A5.5 5.5 0 0 1 9.89 2.11" stroke="#aca899" fill="none"/><path d="M2.82 9.18 A4.5 4.5 0 0 1 9.18 2.82" stroke="#716f64" fill="none"/><path d="M9.89 2.11 A5.5 5.5 0 0 1 2.11 9.89" stroke="#fff" fill="none"/><path d="M9.18 2.82 A4.5 4.5 0 0 1 2.82 9.18" stroke="#f1efe2" fill="none"/><circle cx="6" cy="6" r="2" fill="#000"/></svg>
<div class="t" style="left:892px;top:630px">Preloader--&gt;DA</div>
<div class="btn" style="left:754px;top:685px;width:65px;height:25px"></div><div class="t" style="left:754px;top:690px;width:65px;text-align:center">Start all</div>
<div class="btn" style="left:898px;top:685px;width:65px;height:25px"></div><div class="t" style="left:898px;top:690px;width:65px;text-align:center">Stop all</div>
<div class="a" style="left:98px;top:717px;width:896px;height:21px;border:1px solid;border-color:#aca899 #fff #fff #aca899"></div>
<div class="a" style="left:526px;top:214px;width:182px;height:67px;border:2px solid #22b14c"></div>
<div class="a" style="left:710px;top:212px;width:140px;height:68px;border:2px solid #22b14c"></div>
<div class="a" style="left:727px;top:670px;width:100px;height:46px;border:2px solid #22b14c"></div>
<svg class="a" style="left:840px;top:160px" width="64" height="60"><path d="M59.3 2.6 L17 45" stroke="#22b14c" stroke-width="2.2" stroke-linecap="round"/><path d="M9.3 53.6 L13.5 39.9 L24.4 49.8 Z" fill="#22b14c"/></svg>
<div class="a" style="left:0;top:738px;width:1024px;height:30px;background:linear-gradient(#3168d5 0%,#4993e6 8%,#2157d7 20%,#2663e0 60%,#245dda 90%,#1941a5 100%)"></div>
<div class="a" style="left:0;top:738px;width:97px;height:30px;border-radius:0 14px 14px 0;background:linear-gradient(#3a8d3a 0%,#5fae5f 7%,#3d953d 18%,#389338 60%,#2f842f 90%,#26702a 100%);box-shadow:inset -4px 0 5px -2px #1e5a1e"></div>
<svg class="a" style="left:10px;top:744px" width="20" height="18"><path d="M3 1.5 Q6 0 9.5 1.5 L8.3 8 Q5 6.5 1.8 8 Z" fill="#f0602a"/><path d="M10.5 2 Q14 3.5 18.5 2 L17.3 8.5 Q13 10 9.3 8.5 Z" fill="#70c030"/><path d="M1.6 9 Q5 7.5 8.1 9 L7 15.5 Q4 14 0.5 15.5 Z" fill="#3a90e8"/><path d="M9.1 9.5 Q13 11 17.1 9.5 L16 16 Q12 17.5 8 16 Z" fill="#f8c020"/></svg>
<div class="t b" style="left:35px;top:742px;font-size:17px;line-height:22px;font-style:italic;color:#fff;letter-spacing:0;text-shadow:1px 1px 1px #1a4a1a">start</div>
<div class="a" style="left:107px;top:741px;width:86px;height:25px;border-radius:3px;background:linear-gradient(#4a8af0,#3c81f3 20%,#3577ec 80%,#2c64d8);border:1px solid #2a5ad0;box-shadow:inset 1px 1px 0 #6ea4f8"></div>
<svg class="a" style="left:116px;top:745px" width="16" height="16"><circle cx="8" cy="8" r="7.5" fill="#f8c830" stroke="#d08a10" stroke-width=".8"/><ellipse cx="5.5" cy="5.5" rx="1" ry="1.5" fill="#222"/><ellipse cx="10.5" cy="5.5" rx="1" ry="1.5" fill="#222"/><path d="M3 8.5 Q8 16 13 8.5 Z" fill="#d02020"/><path d="M3.5 8.7 h9" stroke="#fff" stroke-width="1"/></svg>
<div class="t" style="left:135px;top:747px;font-size:11px;color:#fff;letter-spacing:0">Yahoo...</div>
<div class="a" style="left:195px;top:741px;width:86px;height:25px;border-radius:3px;background:linear-gradient(#4a8af0,#3c81f3 20%,#3577ec 80%,#2c64d8);border:1px solid #2a5ad0;box-shadow:inset 1px 1px 0 #6ea4f8"></div>
<svg class="a" style="left:204px;top:745px" width="16" height="16"><circle cx="8" cy="8" r="7.5" fill="#2a6ab0"/><circle cx="8" cy="8" r="6" fill="#d8ecfa"/><circle cx="8" cy="8" r="4.8" fill="#3a8ad8"/><path d="M6 10 v-5 l4 -1 v5" stroke="#fff" stroke-width="1.2" fill="none"/><circle cx="5.5" cy="10.5" r="1.3" fill="#fff"/><circle cx="9.5" cy="9.5" r="1.3" fill="#fff"/></svg>
<div class="t" style="left:223px;top:747px;font-size:11px;color:#fff;letter-spacing:0">iTunes</div>
<div class="a" style="left:282px;top:741px;width:86px;height:25px;border-radius:3px;background:linear-gradient(#4a8af0,#3c81f3 20%,#3577ec 80%,#2c64d8);border:1px solid #2a5ad0;box-shadow:inset 1px 1px 0 #6ea4f8"></div>
<svg class="a" style="left:291px;top:745px" width="16" height="16"><ellipse cx="8" cy="8" rx="6" ry="7" fill="none" stroke="#d81c24" stroke-width="3.5"/></svg>
<div class="t" style="left:310px;top:747px;font-size:11px;color:#fff;letter-spacing:0">Faceb...</div>
<div class="a" style="left:370px;top:741px;width:87px;height:25px;border-radius:3px;background:linear-gradient(#4a8af0,#3c81f3 20%,#3577ec 80%,#2c64d8);border:1px solid #2a5ad0;box-shadow:inset 1px 1px 0 #6ea4f8"></div>
<svg class="a" style="left:379px;top:745px" width="16" height="16"><path d="M3 0.5 h7 l3.5 3.5 v11.5 h-10.5z" fill="#f4f0e4" stroke="#999" stroke-width=".8"/><circle cx="9" cy="6.5" r="3" fill="none" stroke="#e8901c" stroke-width="2"/><path d="M7 8.5 L2.5 13.5" stroke="#e8901c" stroke-width="2.5"/></svg>
<div class="t" style="left:398px;top:747px;font-size:11px;color:#fff;letter-spacing:0">sp fla ...</div>
<div class="a" style="left:459px;top:741px;width:86px;height:25px;border-radius:3px;background:linear-gradient(#4a8af0,#3c81f3 20%,#3577ec 80%,#2c64d8);border:1px solid #2a5ad0;box-shadow:inset 1px 1px 0 #6ea4f8"></div>
<svg class="a" style="left:468px;top:745px" width="16" height="16"><circle cx="9" cy="6.5" r="5.5" fill="#3a9a40"/><path d="M6 4 q3 -2 5 0 q0 3 -3 3" fill="#6aa0e8"/><path d="M1 9 Q5 5 9 8 L7 15 Z" fill="#d8b030"/><path d="M5 9 h8 l-4 6z" fill="#20a030"/></svg>
<div class="t" style="left:487px;top:747px;font-size:11px;color:#fff;letter-spacing:0">Intern...</div>
<div class="a" style="left:547px;top:741px;width:86px;height:25px;border-radius:3px;background:linear-gradient(#4a8af0,#3c81f3 20%,#3577ec 80%,#2c64d8);border:1px solid #2a5ad0;box-shadow:inset 1px 1px 0 #6ea4f8"></div>
<svg class="a" style="left:556px;top:745px" width="16" height="16"><g transform="translate(-2,-3)" shape-rendering="crispEdges"><rect x="2" y="6" width="5" height="8" fill="#000080"/><rect x="3" y="6" width="4" height="7" fill="#0000f0"/><rect x="13" y="5" width="5" height="8" fill="#000060"/><rect x="13" y="6" width="4" height="6" fill="#0010e0"/><rect x="6" y="4" width="5" height="11" fill="#000080"/><rect x="6" y="4" width="5" height="1" fill="#00b8ff"/><rect x="7" y="5" width="4" height="9" fill="#0000f0"/><rect x="10" y="7" width="6" height="10" fill="#000070"/><rect x="10" y="7" width="6" height="1" fill="#00b8ff"/><rect x="11" y="8" width="4" height="8" fill="#0000f0"/><g fill="#f0e020"><rect x="3" y="7" width="1" height="1"/><rect x="5" y="9" width="1" height="1"/><rect x="7" y="6" width="1" height="1"/><rect x="9" y="10" width="1" height="1"/><rect x="11" y="8" width="1" height="1"/><rect x="13" y="10" width="1" height="1"/><rect x="12" y="15" width="1" height="2"/></g></g></svg>
<div class="t" style="left:575px;top:747px;font-size:11px;color:#fff;letter-spacing:0">SPMult...</div>
<div class="t" style="left:646px;top:747px;color:#94b6f0;letter-spacing:0;font-size:11.5px">Desktop</div>
<svg class="a" style="left:693px;top:742px" width="10" height="8"><path d="M1 1 l3 3 l-3 3 M5 1 l3 3 l-3 3" stroke="#c8dcf8" stroke-width="1.2" fill="none"/></svg>
<div class="a" style="left:716px;top:738px;width:308px;height:30px;background:linear-gradient(#0c99f0,#13a0ee 15%,#0f8ee6 80%,#0b71c8);border-left:1px solid #1050b0;box-shadow:inset 1px 0 0 #60c0f8"></div>
<svg class="a" style="left:726px;top:745px" width="16" height="16"><path d="M1 15 L8 11 L4 9z M4 10 L11 6 L7 4z M8 5 L15 1 L11 -1z" fill="#30c030" stroke="#105010" stroke-width=".6"/></svg>
<svg class="a" style="left:743px;top:745px" width="16" height="16"><ellipse cx="8.5" cy="8.5" rx="7.5" ry="7" fill="#f0c050" stroke="#c08020" stroke-width=".8"/><circle cx="5" cy="6" r="1.4" fill="#30a040"/><circle cx="9" cy="4" r="1.4" fill="#3070e0"/><circle cx="4.5" cy="10" r="1.4" fill="#e03030"/></svg>
<svg class="a" style="left:762px;top:745px" width="16" height="16"><rect x="6" y="3" width="7" height="12" rx="1" transform="rotate(25 9 9)" fill="#d8d8d8" stroke="#888" stroke-width=".8"/><circle cx="4" cy="4" r="3.5" fill="#e02020" stroke="#fff" stroke-width=".8"/><path d="M2.5 2.5 l3 3 M5.5 2.5 l-3 3" stroke="#fff" stroke-width="1"/></svg>
<svg class="a" style="left:780px;top:745px" width="16" height="16"><circle cx="9" cy="6.5" r="5.5" fill="#3a9a40"/><path d="M6 4 q3 -2 5 0 q0 3 -3 3" fill="#6aa0e8"/><path d="M1 9 Q5 5 9 8 L7 15 Z" fill="#d8b030"/><path d="M5 9 h8 l-4 6z" fill="#20a030"/></svg>
<svg class="a" style="left:798px;top:745px" width="16" height="16"><path d="M1 6 h3 l5 -4 v12 l-5 -4 h-3z" fill="#e07040" stroke="#502010" stroke-width=".8"/><path d="M11 4 q2 4 0 8 M13 2 q3 6 0 12" stroke="#333" stroke-width="1" fill="none"/></svg>
<svg class="a" style="left:815px;top:745px" width="16" height="16"><rect x="6" y="1" width="9" height="7" fill="#a8d8f8" stroke="#5080b0" stroke-width=".8"/><rect x="1" y="5" width="9" height="7" fill="#c8e8fc" stroke="#5080b0" stroke-width=".8"/><path d="M3 14 h5" stroke="#ccc" stroke-width="2"/></svg>
<svg class="a" style="left:834px;top:745px" width="16" height="16"><path d="M7 1 L13 3 Q13 11 7 15 Q1 11 1 3 Z" fill="#d82020" stroke="#701010" stroke-width=".8"/><path d="M4.5 5.5 l5 5 M9.5 5.5 l-5 5" stroke="#fff" stroke-width="1.6"/></svg>
<svg class="a" style="left:852px;top:745px" width="16" height="16"><circle cx="8" cy="8" r="7.5" fill="#f8c830" stroke="#d08a10" stroke-width=".8"/><ellipse cx="5.5" cy="5.5" rx="1" ry="1.5" fill="#222"/><ellipse cx="10.5" cy="5.5" rx="1" ry="1.5" fill="#222"/><path d="M3 8.5 Q8 16 13 8.5 Z" fill="#d02020"/><path d="M3.5 8.7 h9" stroke="#fff" stroke-width="1"/></svg>
<svg class="a" style="left:870px;top:745px" width="16" height="16"><circle cx="8" cy="8" r="7.5" fill="#e8401c"/><path d="M8 2 a6 6 0 0 1 6 6" stroke="#fff" stroke-width="2" fill="none"/><text x="7" y="13" font-family="Liberation Sans" font-size="8" font-weight="bold" fill="#fff" text-anchor="middle">x</text></svg>
<svg class="a" style="left:888px;top:745px" width="16" height="16"><path d="M2 10 L10 1 L15 5 L7 15z" fill="#f0a020" stroke="#333" stroke-width="1"/><path d="M9 3 L5 9 h4 l-3 5" stroke="#fff" stroke-width="1" fill="none"/></svg>
<svg class="a" style="left:906px;top:745px" width="16" height="16"><rect x="1" y="3" width="15" height="11" fill="#76b900"/><path d="M2 9 q6 -6 12 0 q-6 5 -12 0" stroke="#d8f0a0" fill="none" stroke-width="1"/></svg>
<svg class="a" style="left:924px;top:745px" width="16" height="16"><circle cx="7" cy="7" r="6" fill="#707070" stroke="#333" stroke-width=".8"/><circle cx="7" cy="7" r="3" fill="#a8a8a8"/><path d="M10 15 l5 -5 M12 15 l3 -3" stroke="#8888e8" stroke-width="1"/></svg>
<svg class="a" style="left:942px;top:745px" width="16" height="16"><path d="M3 0.5 h7 l3.5 3.5 v11.5 h-10.5z" fill="#f4f0e4" stroke="#999" stroke-width=".8"/><circle cx="9" cy="6.5" r="3" fill="none" stroke="#e8901c" stroke-width="2"/><path d="M7 8.5 L2.5 13.5" stroke="#e8901c" stroke-width="2.5"/></svg>
<div class="t" style="left:968px;top:747px;color:#fff;letter-spacing:0;font-size:12px">1:20 PM</div></body></html>
